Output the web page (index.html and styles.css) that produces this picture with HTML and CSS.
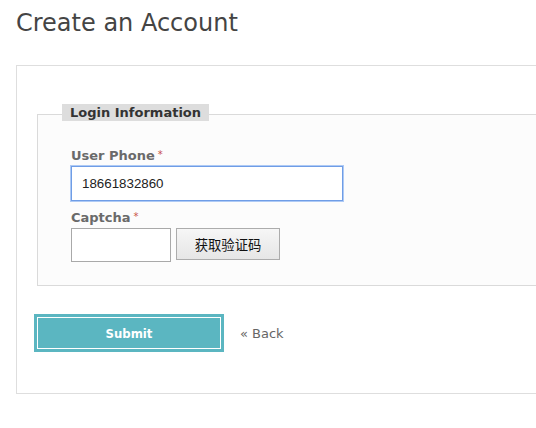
FILE: index.html
```html
<!DOCTYPE html>
<html>
<head>
<meta charset="utf-8">
<link rel="stylesheet" href="styles.css">
</head>
<body>
<div class="page">
  <h1 class="title">Create an Account</h1>
  <form class="panel">
    <fieldset class="group">
      <legend class="legend">Login Information</legend>
      <div class="field">
        <label class="label">User Phone<span class="req">*</span></label>
        <input class="input input-phone focused" type="text" value="18661832860">
      </div>
      <div class="field">
        <label class="label">Captcha<span class="req">*</span></label>
        <div class="captcha-row">
          <input class="input input-captcha" type="text">
          <button type="button" class="btn-code">获取验证码</button>
        </div>
      </div>
    </fieldset>
    <div class="actions">
      <button type="button" class="btn-submit">Submit</button>
      <a class="back" href="#">« Back</a>
    </div>
  </form>
</div>
</body>
</html>
```
FILE: styles.css
```css
html, body {
  margin: 0;
  padding: 0;
  background: #fff;
}
body {
  font-family: "DejaVu Sans", Verdana, sans-serif;
  color: #444;
}
.page {
  padding-left: 16px;
}
.title {
  margin: 9px 0 28px 0;
  font-size: 24px;
  font-weight: normal;
  line-height: 28px;
  color: #444;
}
.panel {
  border: 1px solid #dedede;
  border-right: none;
  background: #fff;
  padding: 38px 0 41px 17px;
  box-sizing: border-box;
  height: 329px;
}
.group {
  margin: 0 0 0 3px;
  border: 1px solid #dadada;
  border-right: none;
  background: #fcfcfc;
  padding: 23px 0 23px 33px;
}
.legend {
  margin-left: -9px;
  padding: 0 8px 3px 8px;
  background-image: linear-gradient(#dddddd, #dddddd);
  background-repeat: no-repeat;
  background-size: 100% 17px;
  font-weight: bold;
  font-size: 13px;
  line-height: 17px;
  color: #333;
}
.field {
  display: flex;
  flex-direction: column;
  align-items: flex-start;
}
.field + .field {
  margin-top: 8px;
}
.label {
  font-weight: bold;
  font-size: 13px;
  line-height: 16px;
  color: #6a6a6a;
  margin-bottom: 2px;
}
.req {
  color: #c8504a;
  font-size: 10px;
  font-weight: normal;
  margin-left: 3px;
  vertical-align: 2px;
}
.input {
  box-sizing: border-box;
  border: 1px solid #a9a9a9;
  background: #fff;
  font-family: "Liberation Sans", Arial, sans-serif;
  font-size: 13.33px;
  color: #222;
  padding: 0 10px;
  margin: 0;
}
.input-phone {
  width: 272px;
  height: 35px;
}
.focused {
  border: 1px solid #6f9de6;
  box-shadow: 0 0 0 1px #aecaf5;
  outline: none;
}
.captcha-row {
  display: flex;
  gap: 5px;
  align-items: flex-start;
}
.input-captcha {
  width: 100px;
  height: 34px;
}
.btn-code {
  width: 104px;
  height: 32px;
  border: 1px solid #acacac;
  background: linear-gradient(#f6f6f6, #e6e6e6);
  font-family: "Noto Sans CJK SC", sans-serif;
  font-size: 13.33px;
  color: #111;
  padding: 0;
  margin: 0;
}
.actions {
  display: flex;
  align-items: center;
  margin-top: 28px;
}
.btn-submit {
  width: 190px;
  height: 38px;
  background: #5bb6c1;
  border: 3px solid #5bb6c1;
  box-shadow: inset 0 0 0 1px #fff;
  color: #fff;
  font-family: "DejaVu Sans Condensed", "DejaVu Sans", sans-serif;
  font-weight: bold;
  font-size: 13px;
  padding: 0;
  margin: 0;
}
.back {
  margin-left: 16px;
  font-size: 13px;
  color: #666;
  text-decoration: none;
}
```
